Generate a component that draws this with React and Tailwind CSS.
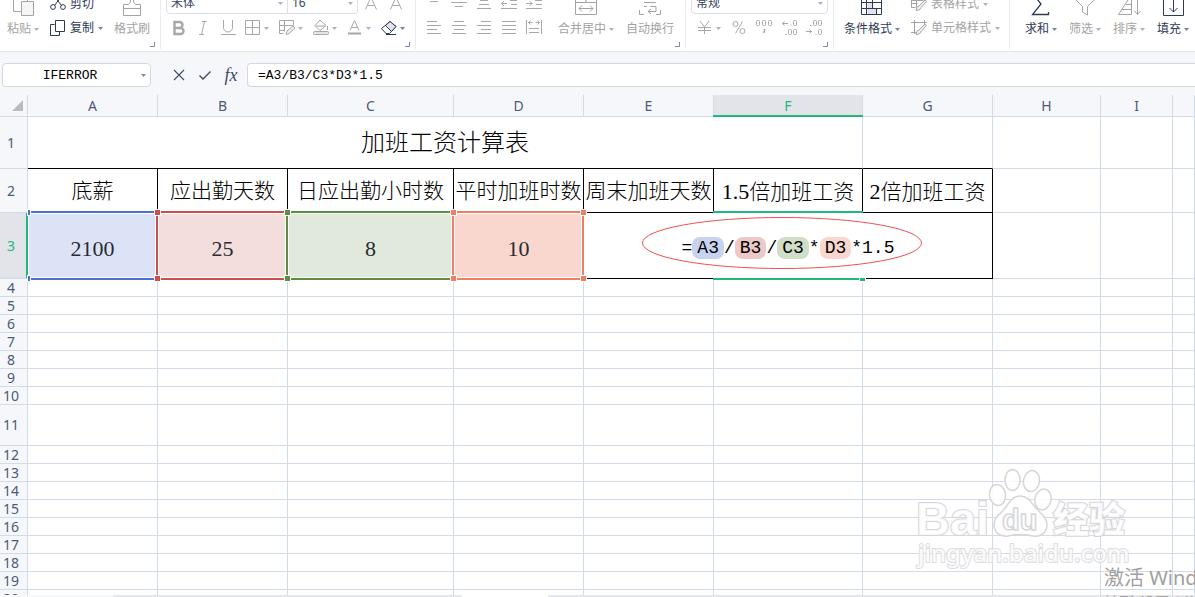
import React from "react";

const UI = "font-['Noto_Sans','Noto_Sans_CJK_SC',sans-serif]";
const MONO = "font-['Liberation_Mono','Noto_Sans_CJK_SC',monospace]";
const SERIF = "font-['Liberation_Serif','Noto_Sans_CJK_SC',serif]";

function Caret({ className = "text-[#a9b1c6]" }) {
  return (
    <svg className={`shrink-0 ${className}`} width="5" height="3" viewBox="0 0 5 3" aria-hidden="true">
      <path d="M0 0h5L2.500 3z" fill="currentColor" />
    </svg>
  );
}

function Icon({ size = 16, children, className = "" }) {
  return (
    <svg
      className={`shrink-0 ${className}`}
      width={size}
      height={size}
      viewBox={`0 0 ${size} ${size}`}
      fill="none"
      stroke="currentColor"
      aria-hidden="true"
    >
      {children}
    </svg>
  );
}

function BigButton({ label, icon, caret, active }) {
  return (
    <button type="button" className={`flex flex-col items-center ${active ? "text-[#2f3a55]" : "text-[#a3a3a3]"}`}>
      <span className="flex h-6 items-center">{icon}</span>
      <span className="flex h-6 items-center gap-[3px] pt-[2px] whitespace-nowrap text-[12px]">
        {label}
        {caret && <Caret className={active ? "text-[#7482a3]" : "text-[#a9b1c6]"} />}
      </span>
    </button>
  );
}

function RowButton({ label, icon, caret, active }) {
  return (
    <button
      type="button"
      className={`flex h-6 items-center gap-1 whitespace-nowrap text-[12px] ${active ? "text-[#2f3a55]" : "text-[#a3a3a3]"}`}
    >
      {icon}
      {label}
      {caret && <Caret className={active ? "text-[#7482a3]" : "text-[#a9b1c6]"} />}
    </button>
  );
}

function IconButton({ title, children }) {
  return (
    <button type="button" aria-label={title} className="flex h-6 w-[25px] items-center justify-center text-[#a8a8a8]">
      {children}
    </button>
  );
}

function SplitButton({ title, children, active }) {
  return (
    <button
      type="button"
      aria-label={title}
      className={`flex h-6 items-center gap-[3px] ${active ? "text-[#2f3a55]" : "text-[#a8a8a8]"}`}
    >
      {children}
      <Caret className={active ? "text-[#7482a3]" : "text-[#a9b1c6]"} />
    </button>
  );
}

function Combo({ label, value, className }) {
  return (
    <label className={`flex h-[22px] items-center border border-[#dcdfe5] bg-white pr-1 ${className}`}>
      <select
        aria-label={label}
        defaultValue={value}
        className="min-w-0 flex-1 appearance-none bg-transparent pl-1 text-[12px] leading-4 text-[#3a4460] outline-none"
      >
        <option>{value}</option>
      </select>
      <Caret />
    </label>
  );
}

function Group({ className, launcher, children }) {
  return (
    <div className={`relative flex h-[49px] shrink-0 items-end border-r border-[#e9ebef] pb-[9px] ${className}`}>
      {children}
      {launcher && (
        <button type="button" aria-label="更多设置" className="absolute right-[5px] bottom-[2px] text-[#7d8aa8]">
          <svg width="5" height="5" viewBox="0 0 5 5" fill="none" stroke="currentColor" aria-hidden="true">
            <path d="M4.500 0v4.500H0" />
          </svg>
        </button>
      )}
    </div>
  );
}

function Ribbon() {
  return (
    <div className={`flex h-[52px] shrink-0 items-start overflow-hidden border-b border-[#e4e5e8] bg-white ${UI}`}>
      <Group launcher className="w-[161px] gap-[11px] pl-[7px]">
        <BigButton
          caret
          label="粘贴"
          icon={
            <Icon size={24}>
              <path d="M10.500 19.500h-8v-18h14v8" />
              <path d="M10.500 9.500h12v14h-12z" fill="#f4f5f6" />
            </Icon>
          }
        />
        <div className="flex flex-col">
          <RowButton
            active
            label="剪切"
            icon={
              <Icon>
                <circle cx="3" cy="11" r="2.400" />
                <circle cx="13" cy="11" r="2.400" />
                <path d="M4.500 9.500L12.500-1M11.500 9.500L3.500-1" />
              </Icon>
            }
          />
          <RowButton
            active
            caret
            label="复制"
            icon={
              <Icon>
                <path d="M4.500 4.500h-4v11h9v-4" />
                <path d="M5.500 .5h9v11h-9z" />
              </Icon>
            }
          />
        </div>
        <BigButton
          label="格式刷"
          icon={
            <Icon size={24}>
              <path d="M10.500 2v8l-2 2.500h-5v11h17v-11h-5l-2-2.500v-8M3.500 16.500h17" />
            </Icon>
          }
        />
      </Group>

      <Group launcher className="w-[255px] pl-[5px]">
        <div className="flex flex-col">
          <div className="flex h-6 items-start">
            <Combo label="字体" value="宋体" className="w-[122px] rounded-l-sm" />
            <Combo label="字号" value="16" className="w-[70px] rounded-r-sm border-l-0" />
            <IconButton title="增大字号">
              <Icon>
                <path d="M2.500 13.500L8 1l5.500 12.500M4.500 9.500h7" />
              </Icon>
            </IconButton>
            <IconButton title="减小字号">
              <Icon>
                <path d="M2.500 13.500L8 1l5.500 12.500M4.500 9.500h7" />
              </Icon>
            </IconButton>
          </div>
          <div className="flex h-6 items-center">
            <IconButton title="加粗">
              <Icon>
                <path d="M3.500 2h5a3 3 0 010 6h-5zM3.500 8h6a3 3 0 010 6h-6z" strokeWidth="2.400" />
              </Icon>
            </IconButton>
            <IconButton title="倾斜">
              <Icon>
                <path d="M6 1.500h5M3 14.500h5M8.500 1.500l-3 13" />
              </Icon>
            </IconButton>
            <IconButton title="下划线">
              <Icon>
                <path d="M2.500 0v7.500a4.500 4.500 0 009 0V0M0 14.500h15" />
              </Icon>
            </IconButton>
            <div className="flex gap-[10px] pl-1">
              <SplitButton title="边框">
                <Icon>
                  <path d="M.5 .5h14v14H.5zM7.500 .5v14M.5 7.500h14" />
                </Icon>
              </SplitButton>
              <SplitButton title="绘图边框">
                <Icon>
                  <path d="M14.500 5V.5H.5v13h4M5.500 .5v11M.5 5.500h14M.5 10.500h5" />
                  <path d="M7 14.500l1-3.500 6-5 2 2-6 5.500z" fill="#f0f1f2" />
                </Icon>
              </SplitButton>
              <SplitButton title="填充颜色">
                <Icon>
                  <path d="M7 0L2 5.500l5 5 6-5L7 0M2.500 6h10M14.500 6v4" />
                  <rect x=".5" y="11.500" width="15" height="3" rx="1" fill="#e4e5e6" />
                </Icon>
              </SplitButton>
              <SplitButton title="字体颜色">
                <Icon>
                  <path d="M3 10.500L7.500 .5l4.500 10M4.500 7.500h6" />
                  <rect x="1.500" y="13" width="12" height="1" fill="currentColor" />
                </Icon>
              </SplitButton>
              <SplitButton active title="清除">
                <Icon>
                  <path d="M9 1.500l6 5-6.500 7H5L.5 8.500z" />
                  <path d="M9 1.500l6 5-4.500 5L4.500 5.500z" fill="#dfe2e8" />
                  <path d="M5 14.500h10" />
                </Icon>
              </SplitButton>
            </div>
          </div>
        </div>
      </Group>

      <Group launcher className="w-[270px] gap-[12px] pl-[5px]">
        <div className="flex flex-col">
          <div className="flex">
            <IconButton title="顶端对齐">
              <Icon>
                <path d="M4 5.500h8M1 1.500h14" />
              </Icon>
            </IconButton>
            <IconButton title="垂直居中">
              <Icon>
                <path d="M3 2.500h10M0 6.500h16M4 10.500h8" />
              </Icon>
            </IconButton>
            <IconButton title="底端对齐">
              <Icon>
                <path d="M4 4.500h8M3 8.500h10M1 12.500h14" />
              </Icon>
            </IconButton>
            <IconButton title="减少缩进">
              <Icon>
                <path d="M0 12.500h16M10 8.500h6M9 4.500h7M0 7.500h6M3 5L.5 7.500 3 10" />
              </Icon>
            </IconButton>
            <IconButton title="增加缩进">
              <Icon>
                <path d="M0 12.500h16M10 8.500h6M9 4.500h7M0 7.500h6M3.500 5L6 7.500 3.500 10" />
              </Icon>
            </IconButton>
          </div>
          <div className="flex">
            <IconButton title="左对齐">
              <Icon>
                <path d="M1 1.500h10M1 5.500h14M1 9.500h10M1 13.500h14" />
              </Icon>
            </IconButton>
            <IconButton title="居中">
              <Icon>
                <path d="M3 1.500h10M1 5.500h14M3 9.500h10M1 13.500h14" />
              </Icon>
            </IconButton>
            <IconButton title="右对齐">
              <Icon>
                <path d="M5 1.500h10M1 5.500h14M5 9.500h10M1 13.500h14" />
              </Icon>
            </IconButton>
            <IconButton title="两端对齐">
              <Icon>
                <path d="M1 1.500h14M1 5.500h14M1 9.500h14M1 13.500h14" />
              </Icon>
            </IconButton>
            <IconButton title="分散对齐">
              <Icon>
                <path d="M.5 0v14M15.500 0v14M2.500 2.500h4M9.500 2.500h4M4.500.5l-2 2 2 2M11.500.5l2 2-2 2M3 8.500h10M3 12.500h10" />
              </Icon>
            </IconButton>
          </div>
        </div>
        <BigButton
          caret
          label="合并居中"
          icon={
            <Icon size={24}>
              <path d="M1.500 2.500h21v20h-21zM1.500 10.500h21M12 2.500v8M5 16.500h14M8 13.500l-3 3 3 3M16 13.500l3 3-3 3" />
            </Icon>
          }
        />
        <BigButton
          label="自动换行"
          icon={
            <Icon size={24}>
              <path d="M1.500 18v4.500H6M18 22.500h4.500V18M1.500 7V2.500H6M18 2.500h4.500V7M6 10.500h12M6 14.500h3M12 14.500h6v5h-8M13 17l-3 2.500 3 2.500" />
            </Icon>
          }
        />
      </Group>

      <Group launcher className="w-[148px] pl-[5px]">
        <div className="flex flex-col">
          <div className="flex h-6 items-start">
            <Combo label="数字格式" value="常规" className="w-[137px] rounded-sm" />
          </div>
          <div className="flex pl-[6px]">
            <SplitButton title="货币">
              <Icon>
                <path d="M3 1l4.500 6L12 1M1 7.500h13M1 10.500h13M7.500 7v7" />
              </Icon>
            </SplitButton>
            <div className="flex pl-[5px]">
              <IconButton title="百分比">
                <Icon>
                  <circle cx="4.500" cy="4" r="2.500" />
                  <circle cx="11.500" cy="11" r="2.500" />
                  <path d="M11.500 1.500L4.500 13.500" />
                </Icon>
              </IconButton>
              <IconButton title="千位分隔">
                <Icon>
                  <rect x=".5" y=".5" width="3" height="5" rx="1" />
                  <rect x="6.500" y=".5" width="3" height="5" rx="1" />
                  <rect x="12.500" y=".5" width="3" height="5" rx="1" />
                  <path d="M8.500 9v2l-1 2" strokeWidth="1.600" />
                </Icon>
              </IconButton>
              <IconButton title="增加小数位">
                <Icon>
                  <rect x="12.500" y=".5" width="3" height="5" rx="1" />
                  <rect x="7.500" y="9.500" width="3" height="5" rx="1" />
                  <rect x="12.500" y="9.500" width="3" height="5" rx="1" />
                  <path d="M1 3.500h6M3.500 1.500l-2 2 2 2M9.500 5h1M4 14.500h1.500" />
                </Icon>
              </IconButton>
              <IconButton title="减少小数位">
                <Icon>
                  <rect x="7.500" y=".5" width="3" height="5" rx="1" />
                  <rect x="12.500" y=".5" width="3" height="5" rx="1" />
                  <rect x="12.500" y="9.500" width="3" height="5" rx="1" />
                  <path d="M0 11.500h6M3.500 9.500l2 2-2 2M9.500 14.500h1M4 5.500h1.500" />
                </Icon>
              </IconButton>
            </div>
          </div>
        </div>
      </Group>

      <Group className="w-[176px] gap-[11px] pl-[10px]">
        <BigButton
          active
          caret
          label="条件格式"
          icon={
            <Icon size={24}>
              <path d="M7.500 10.500h6v6h-6zM7.500 17h10v5h-10z" fill="#dfe2e8" stroke="none" />
              <path d="M1.500 2.500h20v20h-20zM1.500 10.500h20M1.500 16.500h20M6.500 2.500v20M12.500 2.500v14M16.500 16.500v6" />
            </Icon>
          }
        />
        <div className="flex flex-col">
          <RowButton
            caret
            label="表格样式"
            icon={
              <Icon>
                <path d="M13.500 3V.5H.5v11h4M.5 7.500h6M5.500.5v11M.5 4.500h12" />
                <path d="M5 14.500q0-4 3-4.500l6-6 1.500 1.500-5.500 6q-.5 3-5 3z" fill="#f0f1f2" />
              </Icon>
            }
          />
          <RowButton
            caret
            label="单元格样式"
            icon={
              <Icon>
                <path d="M3.500 0v14M0 2.500h15.500M0 12.500h5M13.500 0v4" />
                <path d="M5 14.500q0-4 3-4.500l6-6 1.500 1.500-5.500 6q-.5 3-5 3z" fill="#f0f1f2" />
              </Icon>
            }
          />
        </div>
      </Group>

      <div className="flex h-[49px] shrink-0 items-end gap-[12px] pb-[9px] pl-[15px]">
        <BigButton
          active
          caret
          label="求和"
          icon={
            <Icon size={24}>
              <path d="M19 4V2.500H4.500L12 12l-8.500 10.500h16V20" strokeWidth="1.300" />
            </Icon>
          }
        />
        <BigButton
          caret
          label="筛选"
          icon={
            <Icon size={24}>
              <path d="M2.500 4.500h19v3l-7 7v8.500l-5-3v-5.500l-7-7z" />
            </Icon>
          }
        />
        <BigButton
          caret
          label="排序"
          icon={
            <Icon size={24}>
              <path d="M1.500 22.500h13v-20zM5 17.500h9M9 12.500h5M20.500 3v19M17.500 19l3 3.500 3-3.500" />
            </Icon>
          }
        />
        <BigButton
          active
          caret
          label="填充"
          icon={
            <Icon size={24}>
              <path d="M2.500 2.500h20v21h-20zM12.500 5v15M8.500 16l4 4 4-4" />
            </Icon>
          }
        />
      </div>
    </div>
  );
}

function FormulaBar() {
  return (
    <div className={`flex h-[43px] shrink-0 items-center bg-[#f5f7fa] pt-[3px] pl-[2px] ${MONO}`}>
      <label className="flex h-6 w-[149px] shrink-0 items-center rounded-sm border border-[#d5d8de] bg-white pr-1">
        <input
          aria-label="名称框"
          defaultValue="IFERROR"
          className="w-full min-w-0 bg-transparent pt-[2px] pr-1 text-center text-[13px] text-black outline-none"
        />
        <Caret className="text-[#7d8aa8]" />
      </label>
      <div className="flex shrink-0 gap-[2px] pr-1 pl-4 text-[#3f4a66]">
        <button type="button" aria-label="取消" className="flex size-6 items-center justify-center">
          <Icon>
            <path d="M3 3l10 10M13 3L3 13" strokeWidth="1.100" />
          </Icon>
        </button>
        <button type="button" aria-label="确认" className="flex size-6 items-center justify-center">
          <Icon>
            <path d="M2.500 8.500l3.500 3.500 7.500-7.500" strokeWidth="1.400" />
          </Icon>
        </button>
        <button
          type="button"
          aria-label="插入函数"
          className="flex size-6 items-center justify-center font-['Liberation_Serif',serif] text-[18px] italic"
        >
          fx
        </button>
      </div>
      <input
        aria-label="编辑栏"
        defaultValue="=A3/B3/C3*D3*1.5"
        className="h-6 min-w-0 flex-1 rounded-l-sm border border-r-0 border-[#d5d8de] bg-white pl-[10px] text-[13px] text-black outline-none"
      />
    </div>
  );
}

const COLUMNS = ["A", "B", "C", "D", "E", "F", "G", "H", "I", ""];
const COL_WIDTHS = [
  "w-[130px]",
  "w-[130px]",
  "w-[166px]",
  "w-[130px]",
  "w-[130px]",
  "w-[149px]",
  "w-[130px]",
  "w-[108px]",
  "w-[72px]",
  "",
];
const GRID = "border-r border-b border-[#d3dbe8]";
const INK = "border-r border-b border-black";

function RowHead({ n, selected }) {
  return (
    <th
      scope="row"
      className={`relative border-r border-b border-[#d3dbe8] pr-[5px] text-[14px] leading-4 font-normal ${UI} ${
        selected ? "bg-[#e2e4ea] text-[#21b87c]" : "bg-[#f5f7fa] text-[#4c5a78]"
      }`}
    >
      {n}
      {selected && <span className="absolute inset-y-0 -right-px w-[2px] bg-[#21b87c]" />}
    </th>
  );
}

function Blank({ count }) {
  return Array.from({ length: count }, (_, i) => <td key={i} className={GRID} />);
}

const REFS = [
  { value: "2100", cell: "bg-[#dde3f6]", line: "border-y-2 border-r-2 border-[#4a72cc]", dot: "bg-[#4a72cc]", first: true },
  { value: "25", cell: "bg-[#f4dedd]", line: "border-2 border-[#c9504f]", dot: "bg-[#c9504f]" },
  { value: "8", cell: "bg-[#e1e9dc]", line: "border-2 border-[#5f8c45]", dot: "bg-[#5f8c45]" },
  { value: "10", cell: "bg-[#f9d6ce]", line: "border-2 border-[#ec8065]", dot: "bg-[#ec8065]", last: true },
];

function Handle({ className }) {
  return <span className={`absolute z-20 outline outline-1 outline-white ${className}`} />;
}

function RefCell({ item }) {
  const left = item.first ? "left-0 w-[2px]" : "-left-[3px] w-[5px]";
  return (
    <td
      className={`relative border-r border-b border-[#d3dbe8] pt-[5px] text-center text-[22px] text-[#2b2b33] ${SERIF} ${item.cell}`}
    >
      {item.value}
      <span
        className={`pointer-events-none absolute -top-[2px] -right-px -bottom-[2px] z-10 shadow-[inset_0_0_0_1px_white] ${
          item.first ? "left-0" : "-left-[2px]"
        } ${item.line}`}
      />
      <Handle className={`-top-[3px] h-[5px] ${left} ${item.dot}`} />
      <Handle className={`-bottom-[3px] h-[5px] ${left} ${item.dot}`} />
      {item.last && <Handle className={`-top-[3px] -right-[3px] size-[5px] ${item.dot}`} />}
      {item.last && <Handle className={`-right-[3px] -bottom-[3px] size-[5px] ${item.dot}`} />}
    </td>
  );
}

function Chip({ className, children }) {
  return <span className={`rounded-lg px-[5px] py-[1px] ${className}`}>{children}</span>;
}

function Formula() {
  return (
    <td colSpan={3} className={`relative pt-[5px] text-center text-[18px] whitespace-nowrap text-black ${INK}`}>
      <span className="leading-6">
        =<Chip className="bg-[#c8d3f0]">A3</Chip>/<Chip className="bg-[#ecc8c8]">B3</Chip>/
        <Chip className="bg-[#cfdec6]">C3</Chip>*<Chip className="bg-[#f9d6ce]">D3</Chip>*1.5
      </span>
      <svg
        className="pointer-events-none absolute top-[4px] left-[58px]"
        width="280"
        height="52"
        viewBox="0 0 280 52"
        fill="none"
        aria-hidden="true"
      >
        <ellipse cx="140" cy="26" rx="139.500" ry="25.500" stroke="#f05050" />
      </svg>
      <span className="absolute -top-[2px] right-[129px] left-[129px] z-10 h-[2px] bg-[#21b87c]" />
      <span className="absolute right-[132px] -bottom-[2px] left-[129px] z-10 h-[2px] bg-[#21b87c]" />
      <Handle className="right-[127px] -bottom-[3px] h-[3px] w-[5px] bg-[#21b87c]" />
    </td>
  );
}

const HEADINGS = [
  ["", "底薪"],
  ["", "应出勤天数"],
  ["", "日应出勤小时数"],
  ["", "平时加班时数"],
  ["", "周末加班天数"],
  ["1.5", "倍加班工资"],
  ["2", "倍加班工资"],
];

const ROWS = [4, 5, 6, 7, 8, 9, 10, 11, 12, 13, 14, 15, 16, 17, 18, 19, 20];

function Sheet() {
  return (
    <table className={`w-full table-fixed border-separate border-spacing-0 bg-white ${MONO}`}>
      <colgroup>
        <col className="w-[28px]" />
        {COL_WIDTHS.map((w, i) => (
          <col key={i} className={w} />
        ))}
      </colgroup>
      <thead className={UI}>
        <tr className="h-[22px]">
          <th aria-label="全选" className={`bg-[#f5f7fa] ${GRID}`}>
            <svg className="ml-3" width="11" height="11" viewBox="0 0 11 11" aria-hidden="true">
              <path d="M11 0v11H0z" fill="#b9bbbf" />
            </svg>
          </th>
          {COLUMNS.map((c, i) => (
            <th
              key={i}
              scope="col"
              className={`relative border-r border-b border-[#d3dbe8] text-[14px] leading-5 font-normal ${
                c === "F" ? "bg-[#e2e4ea] text-[#21b87c]" : "bg-[#f5f7fa] text-[#4c5a78]"
              }`}
            >
              {c}
              {c === "F" && <span className="absolute -right-px -bottom-px -left-px h-[2px] bg-[#21b87c]" />}
            </th>
          ))}
        </tr>
      </thead>
      <tbody>
        <tr className="h-[52px]">
          <RowHead n={1} />
          <td
            colSpan={6}
            className="border-r border-b border-r-[#d3dbe8] border-b-black pt-[5px] text-center text-[24px] leading-8 font-light text-black"
          >
            加班工资计算表
          </td>
          <td className="border-r border-b border-r-[#d3dbe8] border-b-black" />
          <Blank count={3} />
        </tr>
        <tr className="h-11">
          <RowHead n={2} />
          {HEADINGS.map(([num, text], i) => (
            <td
              key={i}
              className={`pt-[5px] text-center text-[21px] leading-6 font-light whitespace-nowrap text-black ${INK}`}
            >
              {num && <span className={`text-[22px] font-normal ${SERIF}`}>{num}</span>}
              {text}
            </td>
          ))}
          <Blank count={3} />
        </tr>
        <tr className="h-[66px]">
          <RowHead n={3} selected />
          {REFS.map((item) => (
            <RefCell key={item.value} item={item} />
          ))}
          <Formula />
          <Blank count={3} />
        </tr>
        {ROWS.map((n) => (
          <tr key={n} className={n === 11 ? "h-[41px]" : "h-[18px]"}>
            <RowHead n={n} />
            <Blank count={10} />
          </tr>
        ))}
      </tbody>
    </table>
  );
}

function Watermark() {
  return (
    <svg
      className="pointer-events-none absolute right-[64px] bottom-[20px] z-20"
      width="216"
      height="108"
      viewBox="0 0 216 108"
      fill="white"
      stroke="#d6d6d9"
      strokeWidth="1.500"
      fillOpacity=".85"
      aria-hidden="true"
    >
      <text x="1" y="68" fontSize="47" fontFamily="'Liberation Sans', sans-serif" fontWeight="700" strokeWidth="2" paintOrder="stroke">
        Bai
      </text>
      <ellipse cx="82.500" cy="28" rx="8" ry="10.500" transform="rotate(-8 82.500 28)" />
      <ellipse cx="97.500" cy="13" rx="7.500" ry="10.500" />
      <ellipse cx="116.500" cy="14" rx="8" ry="10.500" transform="rotate(10 116.500 14)" />
      <ellipse cx="128" cy="32.500" rx="8" ry="10.500" transform="rotate(12 128 32.500)" />
      <path d="M105 29c8 0 11 6 15 11 5 6 12 10 12 18 0 9-8 12-14 11-9-2-17-2-25 0-7 1-14-3-14-11 0-9 8-12 12-18 4-6 7-11 14-11z" />
      <text x="87" y="63" fontSize="29" fontFamily="'Liberation Sans', sans-serif" fontWeight="700">
        du
      </text>
      <text x="138" y="66" fontSize="36" fontFamily="'Noto Sans CJK SC', sans-serif" fontWeight="900" strokeWidth="2" paintOrder="stroke">
        经验
      </text>
      <text x="3" y="95" fontSize="24" fontFamily="'Noto Sans', sans-serif" fontWeight="500" strokeWidth="2" stroke="#dededf" paintOrder="stroke">
        jingyan.baidu.com
      </text>
    </svg>
  );
}

export default function App() {
  return (
    <div className="flex h-screen flex-col overflow-hidden bg-white">
      <Ribbon />
      <FormulaBar />
      <main className="relative min-h-0 flex-1 overflow-hidden">
        <Sheet />
        <Watermark />
      </main>
      <footer className="flex h-[2px] shrink-0 bg-[#e6e7ee]">
        <span className="w-[113px] bg-[#f8f9fb]" />
        <span className="w-[349px]" />
        <span className="w-[86px] bg-white" />
      </footer>
      <div
        className={`pointer-events-none absolute inset-0 z-30 flex items-end justify-end overflow-hidden text-[#a0a0a0] ${UI}`}
      >
        <div className="h-[33px] w-[91px] whitespace-nowrap">
          <p className="text-[20px] leading-7">激活 Windows</p>
          <p className="text-[15px] leading-5">转到“设置”以激活 Windows。</p>
        </div>
      </div>
    </div>
  );
}
